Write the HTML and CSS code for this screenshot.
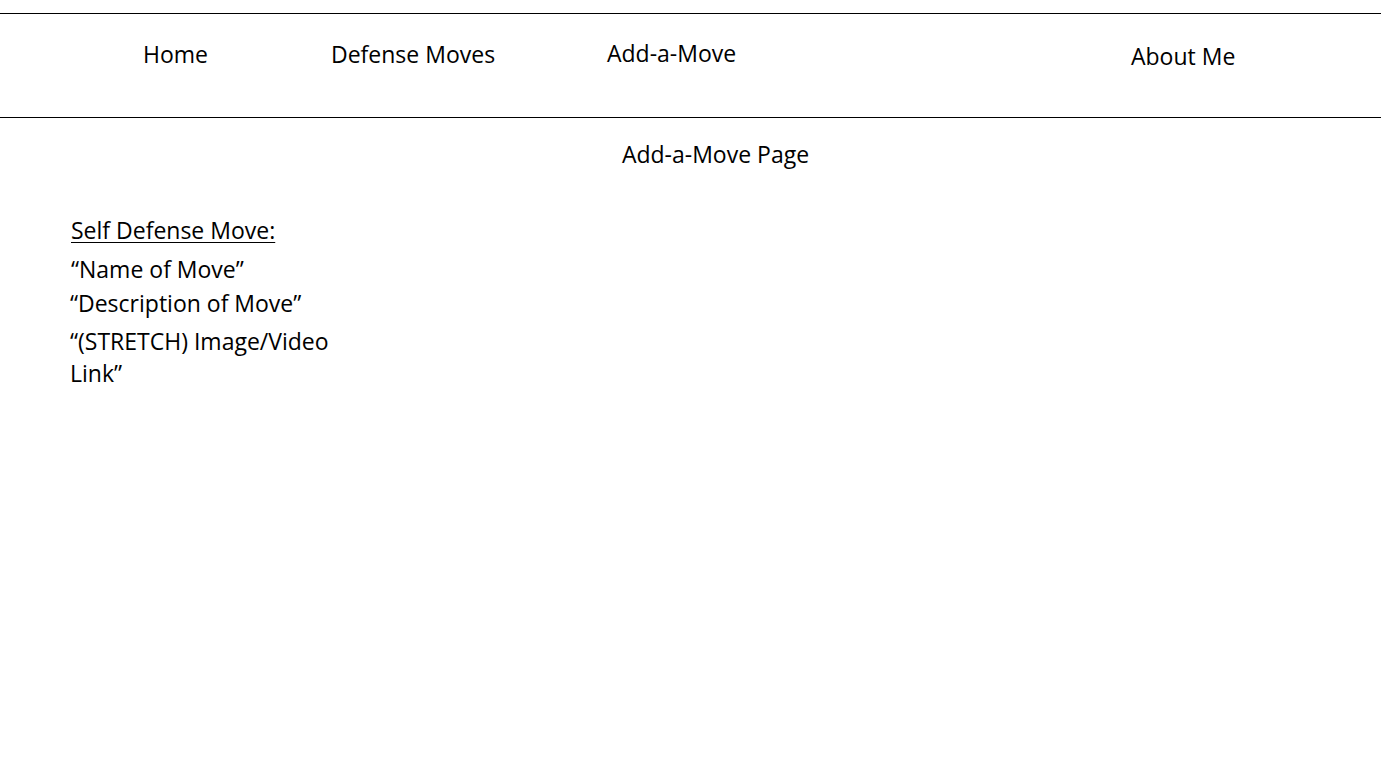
FILE: index.html
```html
<!DOCTYPE html>
<html lang="en">
<head>
<meta charset="utf-8">
<title>Add-a-Move Page</title>
<link rel="stylesheet" href="styles.css">
</head>
<body>
<header class="topbar">
  <nav class="nav">
    <a class="nav-item nav-home" href="#">Home</a>
    <a class="nav-item nav-defense" href="#">Defense Moves</a>
    <a class="nav-item nav-add" href="#">Add-a-Move</a>
    <a class="nav-item nav-about" href="#">About Me</a>
  </nav>
</header>
<main class="page">
  <h1 class="page-title">Add-a-Move Page</h1>
  <section class="move-form">
    <h2 class="form-heading">Self Defense Move:</h2>
    <p class="field field-name">“Name of Move”</p>
    <p class="field field-desc">“Description of Move”</p>
    <p class="field field-media">“(STRETCH) Image/Video Link”</p>
  </section>
</main>
</body>
</html>
```
FILE: styles.css
```css
html, body {
  margin: 0;
  padding: 0;
  background: #ffffff;
  color: #000000;
  font-family: "Open Sans", "Liberation Sans", sans-serif;
}

.topbar {
  margin-top: 13px;
  border-top: 1px solid #000;
  border-bottom: 1px solid #000;
  height: 103px;
  box-sizing: content-box;
}

.nav {
  display: grid;
  grid-template-columns: 188px 276px 524px auto;
  padding-left: 143px;
  height: 100%;
  align-items: start;
}

.nav-item {
  color: #000;
  text-decoration: none;
  font-size: 23px;
  line-height: 30px;
  white-space: nowrap;
}

.nav-home { padding-top: 25px; }
.nav-defense { padding-top: 25px; }
.nav-add { padding-top: 24px; }
.nav-about { padding-top: 27px; }

.page {
  padding: 0;
}

.page-title {
  margin: 0;
  padding: 21px 0 0 50px;
  text-align: center;
  font-size: 23px;
  font-weight: normal;
  line-height: 30px;
}

.move-form {
  padding: 46px 0 0 70px;
  width: 275px;
}

.form-heading {
  margin: 0 0 8px 1px;
  font-size: 23px;
  font-weight: normal;
  line-height: 30px;
  text-decoration: underline;
  text-underline-offset: 3px;
  text-decoration-thickness: 1px;
}

.field {
  margin: 0;
  font-size: 23px;
  line-height: 32px;
}

.field-name { margin-left: 1px; margin-bottom: 2px; }
.field-desc { margin-bottom: 6px; }
.field-media { line-height: 32px; }
```
